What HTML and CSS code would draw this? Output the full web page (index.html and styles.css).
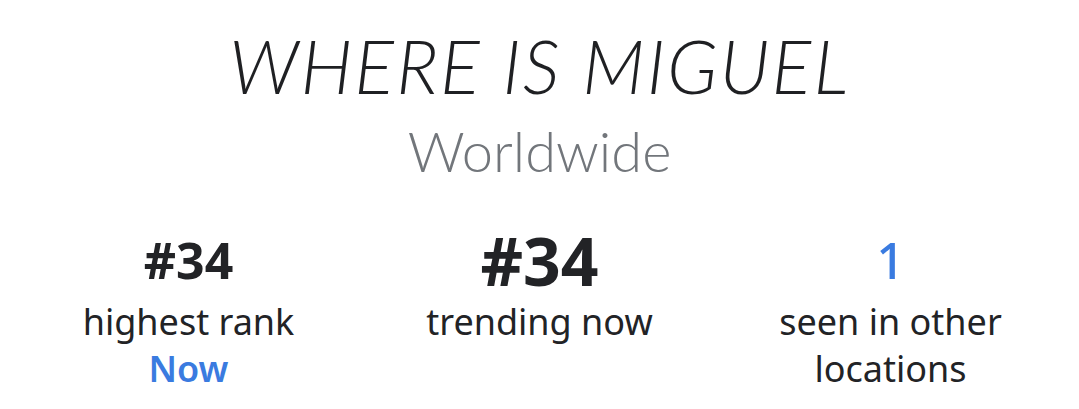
FILE: index.html
```html
<!DOCTYPE html>
<html>
  <head>
    <title>Where is Miguel</title>
    <link rel="stylesheet" href="styles.css">
  </head>
  <body>
    <div class="header">
      <h1 class="title">WHERE IS MIGUEL</h1>
      <div class="region">Worldwide</div>
    </div>

    <div class="stats">
      <div class="stat">
        <div class="value">#34</div>
        <div class="label">highest rank</div>
        <div class="extra">Now</div>
      </div>
      <div class="stat">
        <div class="value big">#34</div>
        <div class="label">trending now</div>
      </div>
      <div class="stat">
        <div class="value blue">1</div>
        <div class="label">seen in other<br>locations</div>
      </div>
    </div>
  </body>
</html>
```

FILE: styles.css
```css
body {
  margin: 0;
  padding: 0;
  background-color: #ffffff;
  font-family: "Noto Sans", "Open Sans", sans-serif;
  color: #222326;
}

.header {
  text-align: center;
  padding-top: 24px;
}

.title {
  margin: 0;
  font-family: Lato, "Open Sans", sans-serif;
  font-weight: 300;
  font-style: italic;
  font-size: 74px;
  line-height: 84px;
  letter-spacing: 2px;
  color: #1f2023;
}

.region {
  margin-top: 11px;
  font-family: Lato, "Open Sans", sans-serif;
  font-weight: 300;
  font-size: 56px;
  line-height: 64px;
  color: #72767b;
}

.stats {
  display: grid;
  grid-template-columns: repeat(3, 1fr);
  padding: 47px 13px 0;
  text-align: center;
}

.value {
  font-size: 50px;
  font-weight: 700;
  line-height: 60px;
}

.value.big {
  font-size: 66px;
}

.value.blue {
  font-weight: 500;
  color: #3a7be0;
}

.label {
  margin-top: 8px;
  font-size: 36px;
  line-height: 47px;
}

.extra {
  font-size: 36px;
  font-weight: 600;
  line-height: 47px;
  color: #3a7be0;
}
```
